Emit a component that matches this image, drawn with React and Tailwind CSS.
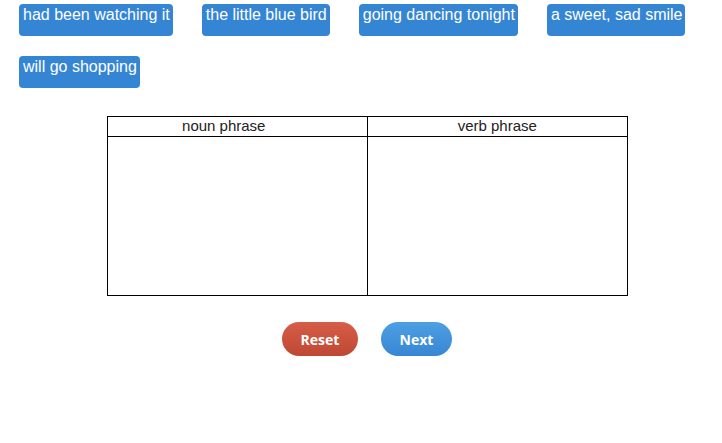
import React from 'react';

const chips = [
  'had been watching it',
  'the little blue bird',
  'going dancing tonight',
  'a sweet, sad smile',
  'will go shopping',
];

export default function App() {
  return (
    <div className="w-[722px] h-[443px] bg-white overflow-hidden" style={{ fontFamily: '"Liberation Sans", Arial, sans-serif' }}>
      {/* word bank */}
      <div className="flex flex-wrap gap-x-[29px] gap-y-[20px] pl-[19px] pr-[19px] pt-[4px]">
        {chips.map((c) => (
          <div
            key={c}
            className="h-[32px] pl-[4px] pr-[3px] pt-[1px] rounded-[4px] bg-[#3585d5] text-white text-[16px] leading-[19px]"
          >
            {c}
          </div>
        ))}
      </div>

      {/* sort table */}
      <div className="ml-[107px] mt-[28px] w-[521px] border border-black grid grid-cols-2 text-[15px] text-[#222]">
        <div className="h-[20px] leading-[17px] text-center pr-[27px] border-r border-b border-black">noun phrase</div>
        <div className="h-[20px] leading-[18px] text-center border-b border-black">verb phrase</div>
        <div className="h-[158px] border-r border-black"></div>
        <div className="h-[158px]"></div>
      </div>

      {/* actions */}
      <div className="flex gap-[23px] ml-[282px] mt-[26px]" style={{ fontFamily: '"Open Sans", sans-serif' }}>
        <button className="w-[76px] h-[34px] rounded-full bg-gradient-to-b from-[#d65d48] to-[#bf4834] text-white text-[14px] font-bold">
          Reset
        </button>
        <button className="w-[71px] h-[34px] rounded-full bg-gradient-to-b from-[#4d9fe2] to-[#3786d4] text-white text-[14px] font-bold">
          Next
        </button>
      </div>
    </div>
  );
}
